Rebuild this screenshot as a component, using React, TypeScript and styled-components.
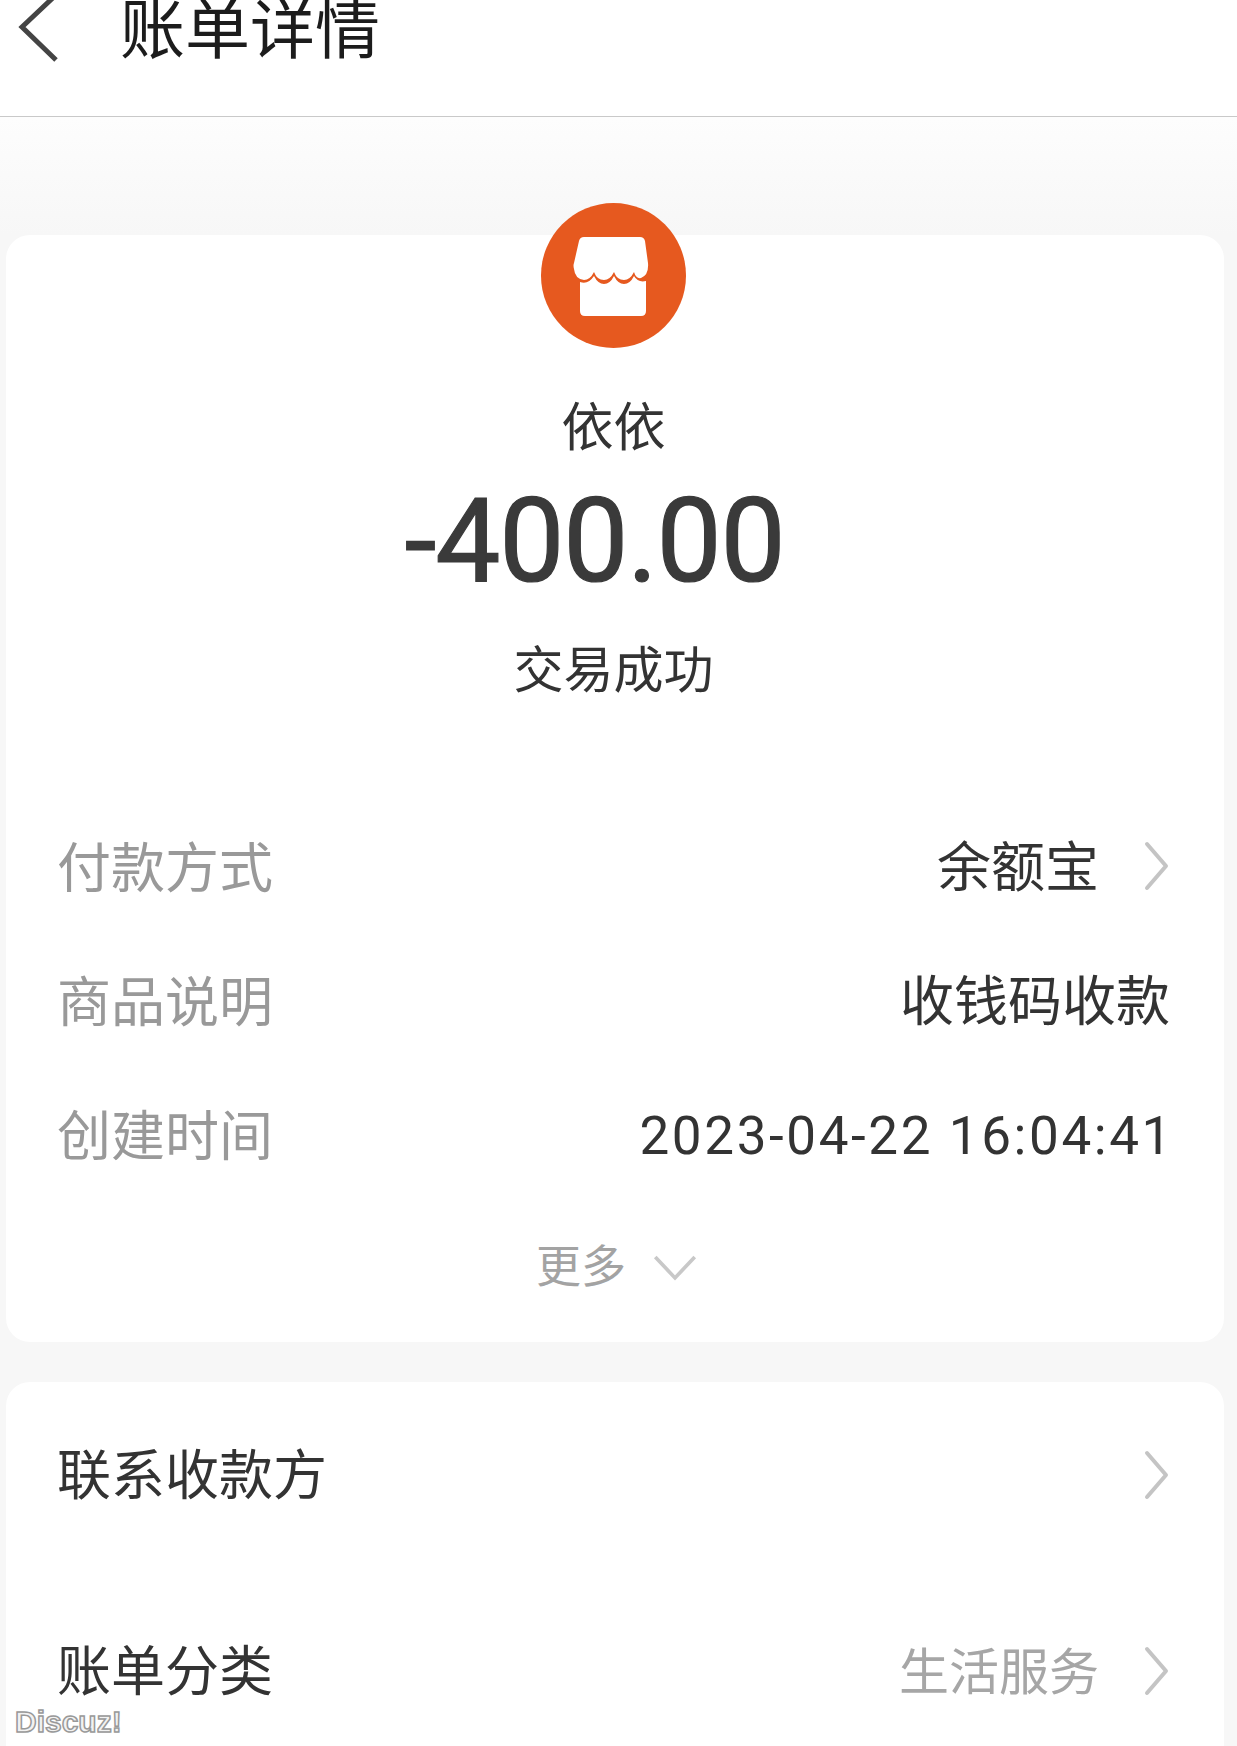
import React from "react";
import styled, { createGlobalStyle } from "styled-components";

const GlobalStyle = createGlobalStyle`
  html, body {
    margin: 0;
    padding: 0;
    height: 1746px;
    overflow: hidden;
    background: #f7f7f7;
    font-family: "Noto Sans CJK SC", "Noto Sans", sans-serif;
  }
`;

type RowType = {
  label: string;
  value: string;
  arrow?: boolean;
  latin?: boolean;
};

const rows: Array<RowType> = [
  { label: "付款方式", value: "余额宝", arrow: true },
  { label: "商品说明", value: "收钱码收款" },
  { label: "创建时间", value: "2023-04-22 16:04:41", latin: true },
];

const ChevronRight = () => (
  <ArrowIcon viewBox="0 0 26 50" aria-hidden="true">
    <path d="M3 3 L22 25 L3 47" fill="none" stroke="#c4c4c4" strokeWidth="4" strokeLinecap="round" strokeLinejoin="round" />
  </ArrowIcon>
);

const StoreIcon = () => (
  <svg viewBox="0 0 145 145" width="145" height="145" aria-hidden="true">
    <circle cx="72.5" cy="72.5" r="72.5" fill="#e6591f" />
    <path
      d="M43 34 H99 Q103 34 104 38 L107 60 Q108 72 100 75 Q95 76 93 69 Q89 77 83 77 Q76 77 73 69 Q69 77 63 77 Q56 77 53 69 Q49 77 43 77 Q34 76 33 66 Q32 62 33 60 L38 38 Q39 34 43 34 Z"
      fill="#fff"
    />
    <path
      d="M39 79 Q47 82 53 73 Q57 81 63 81 Q69 81 73 73 Q77 81 83 81 Q89 81 93 73 Q97 80 105 78 V108 Q105 113 100 113 H44 Q39 113 39 108 Z"
      fill="#fff"
    />
  </svg>
);

const App = () => {
  return (
    <Page>
      <GlobalStyle />
      <Header>
        <BackIcon viewBox="0 0 50 80" aria-hidden="true">
          <path d="M40 -7 L4 27 L38 60" fill="none" stroke="#444" strokeWidth="5" />
        </BackIcon>
        <Title>账单详情</Title>
      </Header>
      <Body>
        <SummaryCard>
          <Avatar>
            <StoreIcon />
          </Avatar>
          <Name>依依</Name>
          <Amount>-400.00</Amount>
          <Status>交易成功</Status>
          <Rows>
            {rows.map((el) => (
              <Row key={el.label}>
                <Label>{el.label}</Label>
                <ValueWrapper>
                  <Value $latin={el.latin}>{el.value}</Value>
                  {el.arrow && <ChevronRight />}
                </ValueWrapper>
              </Row>
            ))}
          </Rows>
          <More>
            更多
            <MoreIcon viewBox="0 0 42 26" aria-hidden="true">
              <path d="M2 3 L21 23 L40 3" fill="none" stroke="#c8c8c8" strokeWidth="3.5" />
            </MoreIcon>
          </More>
        </SummaryCard>
        <ActionCard>
          <ActionRow>
            <ActionLabel>联系收款方</ActionLabel>
            <ChevronRight />
          </ActionRow>
          <ActionRow>
            <ActionLabel>账单分类</ActionLabel>
            <ValueWrapper>
              <Value $muted>生活服务</Value>
              <ChevronRight />
            </ValueWrapper>
          </ActionRow>
        </ActionCard>
      </Body>
      <Watermark>Discuz!</Watermark>
    </Page>
  );
};

export default App;

const Page = styled.div`
  position: relative;
  width: 1237px;
  height: 1746px;
  overflow: hidden;
`;

const Header = styled.header`
  display: flex;
  align-items: flex-start;
  box-sizing: border-box;
  height: 117px;
  padding-left: 18px;
  gap: 52px;
  background: #fff;
  border-bottom: 1px solid #c9c9c9;
`;

const BackIcon = styled.svg`
  width: 50px;
  height: 80px;
  overflow: visible;
`;

const Title = styled.div`
  font-size: 65px;
  line-height: 50px;
  color: #1c1c1c;
`;

const Body = styled.main`
  display: flex;
  flex-direction: column;
  gap: 40px;
  padding: 118px 13px 0 6px;
  background: linear-gradient(#fdfdfd 0, #f7f7f7 118px);
`;

const SummaryCard = styled.section`
  display: flex;
  flex-direction: column;
  align-items: center;
  box-sizing: border-box;
  height: 1107px;
  padding: 0 54px 0 51px;
  background: #fff;
  border-radius: 24px;
`;

const Avatar = styled.div`
  display: flex;
  width: 145px;
  height: 145px;
  margin-top: -32px;
`;

const Name = styled.div`
  margin-top: 46px;
  font-size: 52px;
  line-height: 60px;
  color: #333;
`;

const Amount = styled.div`
  margin-top: 27px;
  padding-right: 38px;
  font-family: Roboto, "Noto Sans", sans-serif;
  font-size: 116px;
  line-height: 120px;
  letter-spacing: -1.2px;
  color: #3a3a3a;
  -webkit-text-stroke: 1.2px #3a3a3a;
`;

const Status = styled.div`
  margin-top: 35px;
  font-size: 50px;
  line-height: 60px;
  color: #333;
`;

const Rows = styled.div`
  display: flex;
  flex-direction: column;
  width: 100%;
  margin-top: 103px;
`;

const Row = styled.div`
  display: flex;
  align-items: center;
  justify-content: space-between;
  height: 134px;
`;

const Label = styled.div`
  padding-bottom: 3px;
  font-size: 54px;
  line-height: 60px;
  color: #999;
`;

const ValueWrapper = styled.div`
  display: flex;
  align-items: center;
  gap: 45px;
`;

const Value = styled.div<{ $latin?: boolean; $muted?: boolean }>`
  padding: ${(props) => (props.$latin ? "4px 0 0" : "0 0 4px")};
  margin-right: ${(props) => (props.$latin ? "-4px" : "0")};
  font-family: ${(props) =>
    props.$latin ? 'Roboto, "Noto Sans", sans-serif' : '"Noto Sans CJK SC", sans-serif'};
  font-size: ${(props) => (props.$latin ? "53px" : props.$muted ? "50px" : "54px")};
  line-height: 60px;
  letter-spacing: ${(props) => (props.$latin ? "2.6px" : "0")};
  color: ${(props) => (props.$muted ? "#a6a6a6" : "#333")};
`;

const ArrowIcon = styled.svg`
  width: 26px;
  height: 50px;
  flex: none;
`;

const More = styled.div`
  display: flex;
  align-items: center;
  gap: 27px;
  margin: 33px 0 0 6px;
  font-size: 45px;
  line-height: 60px;
  color: #a3a3a3;
`;

const MoreIcon = styled.svg`
  width: 44px;
  height: 27px;
  margin-top: 6px;
`;

const ActionCard = styled.section`
  display: flex;
  flex-direction: column;
  gap: 76px;
  box-sizing: border-box;
  height: 420px;
  padding: 32px 54px 0 51px;
  background: #fff;
  border-radius: 24px 24px 0 0;
`;

const ActionRow = styled.div`
  display: flex;
  align-items: center;
  justify-content: space-between;
  height: 120px;

  ${ArrowIcon} {
    margin-top: 2px;
  }
`;

const ActionLabel = styled.div`
  padding-bottom: 4px;
  font-size: 54px;
  line-height: 60px;
  color: #333;
`;

const Watermark = styled.div`
  position: absolute;
  left: 15px;
  bottom: 6px;
  font-family: "Liberation Sans", Arial, sans-serif;
  font-size: 30px;
  font-weight: 700;
  line-height: 36px;
  color: #f2f2f2;
  -webkit-text-stroke: 1.5px #999;
`;
